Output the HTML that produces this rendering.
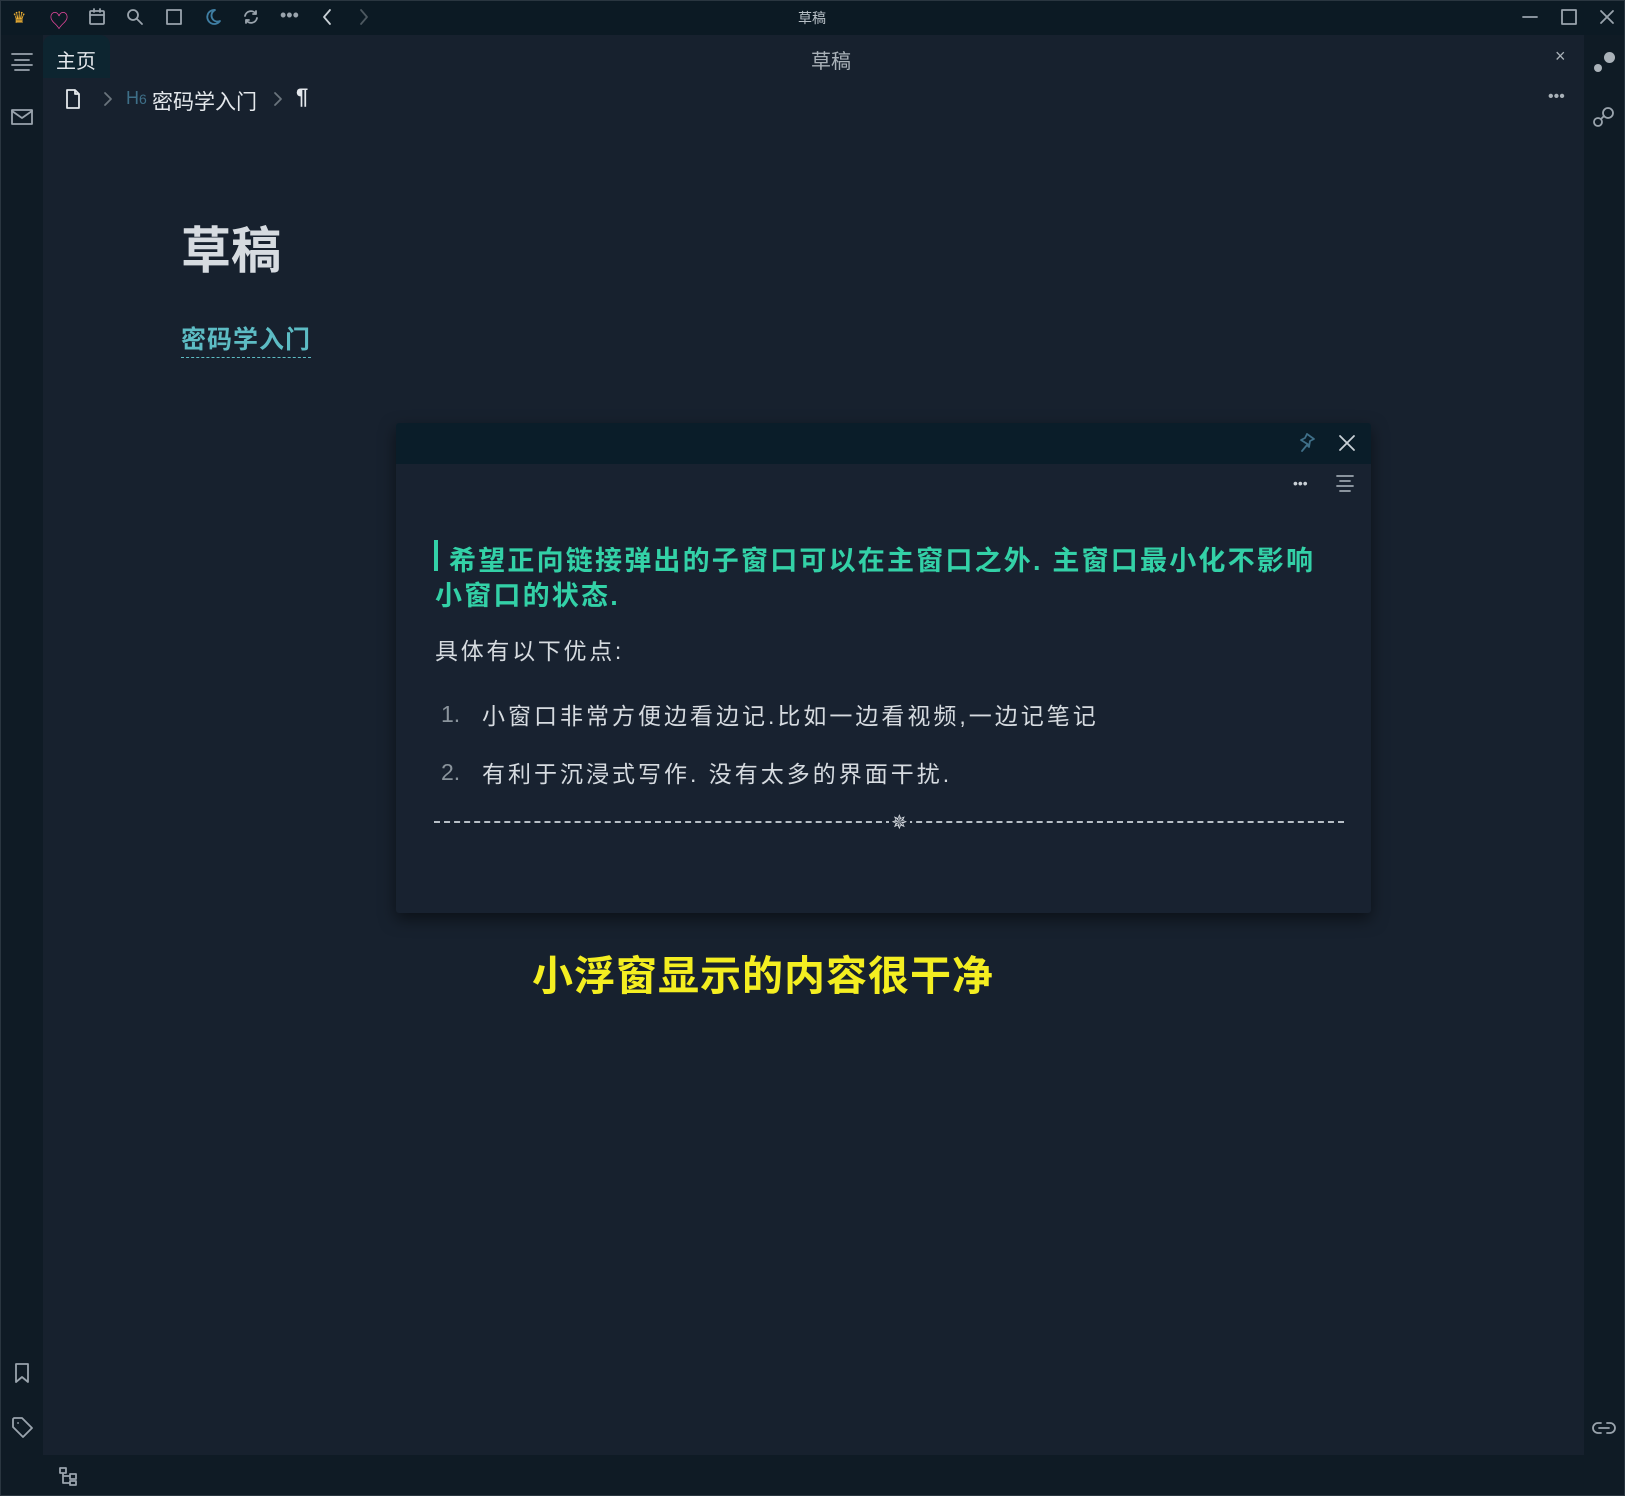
<!DOCTYPE html>
<html><head><meta charset="utf-8"><style>
*{margin:0;padding:0;box-sizing:border-box}
body{width:1625px;height:1496px;background:#0f1a23;font-family:"Liberation Sans","Noto Sans CJK SC",sans-serif;position:relative;overflow:hidden;color:#dfe3e8}
.a{position:absolute}
svg{position:absolute;fill:none;stroke:#9aa4ad;stroke-width:1.8;stroke-linecap:round;stroke-linejoin:round}
</style></head><body>
<div class="a" style="left:0;top:0;width:1625px;height:35px;background:#0c1a24;border-top:1px solid #333"></div>
<div class="a" style="left:0;top:35px;width:43px;height:1461px;background:#0f1b25"></div>
<div class="a" style="left:1584px;top:35px;width:41px;height:1461px;background:#0f1b25"></div>
<div class="a" style="left:43px;top:35px;width:1541px;height:1420px;background:#17212e"></div>
<div class="a" style="left:0;top:1455px;width:1625px;height:41px;background:#0f1b25"></div>
<div class="a" style="left:0;top:0;width:1625px;height:1496px;border:1px solid #2a3640;pointer-events:none"></div>
<div class="a" style="left:12px;top:8px;font-size:16px;color:#f2b233">♛</div>
<div class="a" style="left:49px;top:5px;font-size:20px;color:#e2479a">♡</div>
<svg style="left:88px;top:8px" width="18" height="18"><rect x="2" y="3" width="14" height="13" rx="1"/><path d="M2 7h14M6 1v3M12 1v3"/></svg>
<svg style="left:126px;top:8px" width="18" height="18"><circle cx="7" cy="7" r="5"/><path d="M11 11l5 5"/></svg>
<svg style="left:165px;top:8px" width="18" height="18"><rect x="2" y="2" width="14" height="14"/></svg>
<svg style="left:203px;top:7px;stroke:#3f7ea3" width="20" height="20"><path d="M12 3a7 7 0 1 0 5 11a6 6 0 0 1-5-11z"/></svg>
<svg style="left:242px;top:8px" width="18" height="18"><path d="M3 8a6 6 0 0 1 11-2M15 10a6 6 0 0 1-11 2M14 3v3h-3M4 15v-3h3"/></svg>
<div class="a" style="left:280px;top:5px;font-size:18px;color:#9aa4ad">•••</div>
<svg style="left:320px;top:8px;stroke:#c9d0d6" width="14" height="18"><path d="M10 2l-6 7 6 7"/></svg>
<svg style="left:357px;top:8px;stroke:#4d5860" width="14" height="18"><path d="M4 2l6 7-6 7"/></svg>
<div class="a" style="left:798px;top:8px;font-size:14px;color:#b8c0c7">草稿</div>
<svg style="left:1521px;top:8px" width="18" height="18"><path d="M2 9h14"/></svg>
<svg style="left:1560px;top:8px" width="18" height="18"><rect x="2" y="2" width="14" height="14"/></svg>
<svg style="left:1598px;top:8px" width="18" height="18"><path d="M3 3l12 12M15 3L3 15"/></svg>
<svg style="left:11px;top:52px" width="22" height="20"><path d="M1 2h20M4 8h14M1 13h20M4 18h14"/></svg>
<svg style="left:11px;top:108px" width="22" height="18"><rect x="1" y="2" width="20" height="14"/><path d="M1 3l10 7 10-7"/></svg>
<svg style="left:13px;top:1362px" width="18" height="22"><path d="M3 2h12v18l-6-5-6 5z"/></svg>
<svg style="left:11px;top:1416px" width="22" height="22"><path d="M2 3v8l10 10 9-9L11 2H3zM7 7h.1"/></svg>
<svg style="left:58px;top:1465px" width="22" height="22"><path d="M2 3h6v5H2zM12 9h6v5h-6zM12 16h6v4h-6zM5 8v10h7M5 11h7"/></svg>
<div class="a" style="left:1594px;top:52px;width:22px;height:22px"><div class="a" style="left:10px;top:0;width:11px;height:11px;border-radius:50%;background:#aab2b9"></div><div class="a" style="left:0;top:12px;width:8px;height:8px;border-radius:50%;background:#aab2b9"></div></div>
<svg style="left:1592px;top:106px" width="24" height="22"><circle cx="16" cy="7" r="5"/><circle cx="6" cy="16" r="4"/><path d="M12 10l-3 3"/></svg>
<svg style="left:1592px;top:1418px" width="24" height="20"><path d="M9 5H6a5 5 0 0 0 0 10h3M15 5h3a5 5 0 0 1 0 10h-3M7 10h10"/></svg>
<div class="a" style="left:43px;top:35px;width:67px;height:43px;background:#0d2530;border-radius:10px 10px 0 0"></div>
<div class="a" style="left:56px;top:45px;font-size:20px;color:#e4e8ec">主页</div>
<div class="a" style="left:811px;top:45px;font-size:20px;color:#a9b1b8">草稿</div>
<div class="a" style="left:1555px;top:46px;font-size:18px;color:#a9b1b8">×</div>
<svg style="left:64px;top:88px;stroke:#e4e8ec" width="18" height="22"><path d="M3 2h8l4 4v14H3zM11 2v4h4"/></svg>
<svg style="left:102px;top:91px;stroke:#6a747d" width="12" height="16"><path d="M3 2l6 6-6 6"/></svg>
<div class="a" style="left:126px;top:88px;font-size:18px;color:#3e6f88">H<span style="font-size:14px">6</span></div>
<div class="a" style="left:152px;top:86px;font-size:21px;color:#e4e8ec">密码学入门</div>
<svg style="left:272px;top:91px;stroke:#6a747d" width="12" height="16"><path d="M3 2l6 6-6 6"/></svg>
<div class="a" style="left:296px;top:84px;font-size:22px;font-weight:bold;color:#e4e8ec">¶</div>
<div class="a" style="left:1548px;top:88px;font-size:16px;color:#a9b1b8">•••</div>
<div class="a" style="left:181px;top:211px;font-size:50px;font-weight:bold;color:#d6dbe0">草稿</div>
<div class="a" style="left:181px;top:324px;font-size:25px;color:#5dbcc4;border-bottom:1.5px dashed #5dbcc4;line-height:33px;letter-spacing:1px;font-weight:bold">密码学入门</div>
<div class="a" style="left:396px;top:423px;width:975px;height:490px;background:#182230;box-shadow:0 6px 16px rgba(0,0,0,.5);border-radius:3px;overflow:hidden">
<div style="height:41px;background:#0a1d29"></div>
</div>
<svg style="left:1298px;top:432px;stroke:#3f6f88" width="18" height="22"><path d="M9 2l7 5-4 2-1 6-2-2-5 6M9 2l-2 4-4 2 8 5"/></svg>
<svg style="left:1338px;top:434px;stroke:#c9d0d6" width="18" height="18"><path d="M2 2l14 14M16 2L2 16"/></svg>
<div class="a" style="left:1293px;top:475px;font-size:14px;color:#c9d0d6">•••</div>
<svg style="left:1335px;top:474px" width="20" height="20"><path d="M2 2h16M5 7h10M2 12h16M5 17h10"/></svg>
<div class="a" style="left:434px;top:540px;width:4px;height:31px;background:#33d1a7"></div>
<div class="a" style="left:435px;top:544px;width:960px;font-size:27px;line-height:35px;color:#33d1a7;font-weight:bold;letter-spacing:2.2px;white-space:nowrap"><span style="padding-left:14px"></span>希望正向链接弹出的子窗口可以在主窗口之外. 主窗口最小化不影响<br>小窗口的状态.</div>
<div class="a" style="left:435px;top:632px;font-size:23px;color:#d6dbe0;letter-spacing:2.7px">具体有以下优点:</div>
<div class="a" style="left:441px;top:701px;font-size:23px;color:#8a949c">1.</div>
<div class="a" style="left:482px;top:697px;font-size:23px;color:#d6dbe0;letter-spacing:3px;white-space:nowrap">小窗口非常方便边看边记.比如一边看视频,一边记笔记</div>
<div class="a" style="left:441px;top:759px;font-size:23px;color:#8a949c">2.</div>
<div class="a" style="left:482px;top:755px;font-size:23px;color:#d6dbe0;letter-spacing:3px;white-space:nowrap">有利于沉浸式写作. 没有太多的界面干扰.</div>
<div class="a" style="left:434px;top:821px;width:910px;border-top:2px dashed #b8c0c7"></div>
<div class="a" style="left:889px;top:810px;font-size:20px;color:#d6dbe0;background:#182230;padding:0 2px">✵</div>
<div class="a" style="left:532px;top:942px;font-size:41px;color:#f4ee21;letter-spacing:1px;font-weight:bold">小浮窗显示的内容很干净</div>
</body></html>
